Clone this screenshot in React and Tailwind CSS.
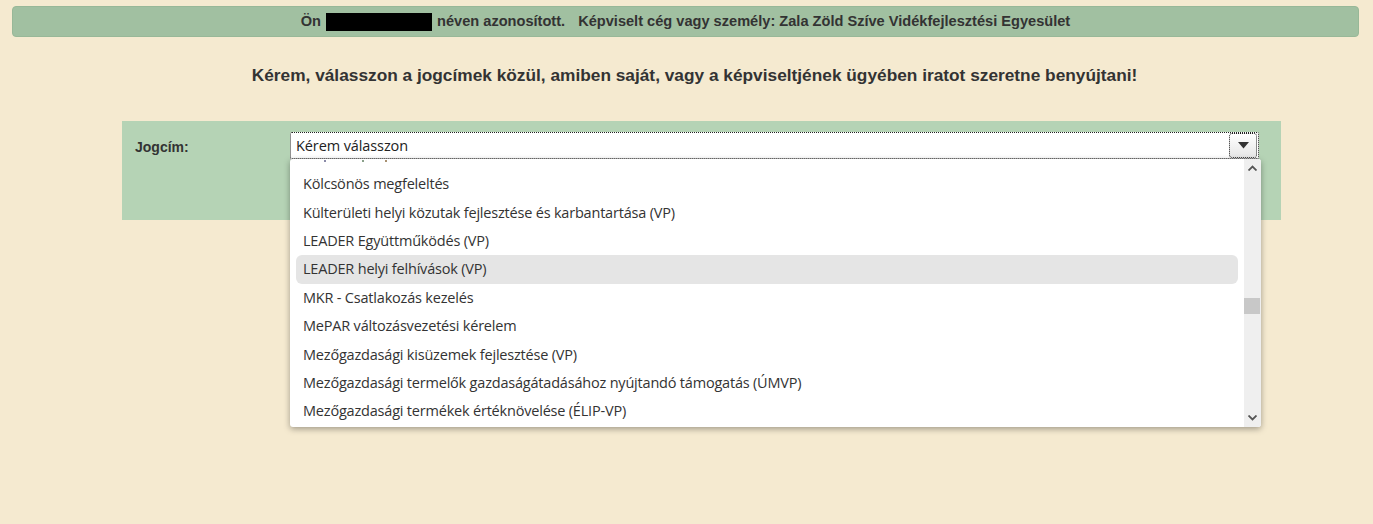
import React from 'react';

const items = [
    'Kölcsönös megfeleltés',
    'Külterületi helyi közutak fejlesztése és karbantartása (VP)',
    'LEADER Együttműködés (VP)',
    'LEADER helyi felhívások (VP)',
    'MKR - Csatlakozás kezelés',
    'MePAR változásvezetési kérelem',
    'Mezőgazdasági kisüzemek fejlesztése (VP)',
    'Mezőgazdasági termelők gazdaságátadásához nyújtandó támogatás (ÚMVP)',
    'Mezőgazdasági termékek értéknövelése (ÉLIP-VP)',
];

const App = () => {
    return (
        <div className="w-[1373px] h-[524px] bg-[#f5ead0] overflow-hidden font-['Liberation_Sans',Arial,sans-serif] text-[#333]">
            {/* top identity bar */}
            <div className="pt-[6px] pl-[12px] pr-[14px]">
                <div className="h-[31px] bg-[#a1c0a1] rounded-[4px] border border-[#98b898] flex items-center justify-center text-[14.6px] font-bold">
                    <span>Ön</span>
                    <span className="inline-block w-[106px] h-[18px] bg-black mx-[5px]"></span>
                    <span>néven azonosított.</span>
                    <span className="ml-[13px]">Képviselt cég vagy személy: Zala Zöld Szíve Vidékfejlesztési Egyesület</span>
                </div>
            </div>

            <h1 className="text-center text-[17.3px] font-bold mt-[28px] pl-[16px] leading-[20px]">
                Kérem, válasszon a jogcímek közül, amiben saját, vagy a képviseltjének ügyében iratot szeretne benyújtani!
            </h1>

            <div className="mt-[36px] ml-[122px] w-[1159px] h-[99px] bg-[#b5d3b5] relative">
                <div className="flex pt-[11px]">
                    <div className="w-[168px] pl-[13px] pt-[5px] text-[14px] font-bold">Jogcím:</div>
                    <div className="w-[969px] h-[27px] bg-white border border-dotted border-[#222] rounded-[2px] flex items-center justify-between font-['Open_Sans',sans-serif] text-[14.5px] text-[#222] shadow-[0_2px_0_#bdbdbd]">
                        <span className="pl-[5px] tracking-[-0.1px]">Kérem válasszon</span>
                        <div className="w-[28px] h-[25px] mr-[1px] rounded-[3px] border border-dotted border-[#222] bg-gradient-to-b from-white to-[#e6e6e6] flex items-center justify-center">
                            <svg width="11" height="7" viewBox="0 0 11 7"><path d="M0 0h11L5.5 6.5z" fill="#333" /></svg>
                        </div>
                    </div>
                </div>

                {/* open dropdown list */}
                <div className="absolute left-[168px] top-[38px] w-[971px] h-[268px] bg-white rounded-[3px] shadow-[0_2px_6px_rgba(0,0,0,0.35)] flex overflow-hidden font-['Open_Sans',sans-serif] text-[14.5px] text-[#333]">
                    <div className="flex-1 relative pt-[11px] pl-[6px] pr-[6px]">
                        {/* descenders of the item scrolled out above */}
                        <div className="absolute top-[1px] left-[34px] w-[2px] h-[2px] bg-[#8a8aa8]"></div>
                        <div className="absolute top-[1px] left-[72px] w-[2px] h-[2px] bg-[#8aa08a]"></div>
                        <div className="absolute top-[1px] left-[95px] w-[2px] h-[2px] bg-[#a89070]"></div>
                        {items.map((t, i) => (
                            <div
                                key={i}
                                className={`h-[28.4px] flex items-center pl-[7px] rounded-[6px] tracking-[-0.2px] ${i === 3 ? 'bg-[#e5e5e5]' : ''}`}
                            >
                                {t}
                            </div>
                        ))}
                    </div>
                    <div className="w-[17px] bg-[#efefef] flex flex-col items-center justify-between py-[6px] relative">
                        <svg width="9" height="6" viewBox="0 0 9 6"><path d="M0.5 5.5L4.5 1.5L8.5 5.5" stroke="#555" strokeWidth="1.8" fill="none" /></svg>
                        <div className="absolute left-0 top-[139px] w-[16px] h-[16px] bg-[#c8c8c8]"></div>
                        <svg width="9" height="6" viewBox="0 0 9 6"><path d="M0.5 0.5L4.5 4.5L8.5 0.5" stroke="#555" strokeWidth="1.8" fill="none" /></svg>
                    </div>
                </div>
            </div>
        </div>
    );
};

export default App;
